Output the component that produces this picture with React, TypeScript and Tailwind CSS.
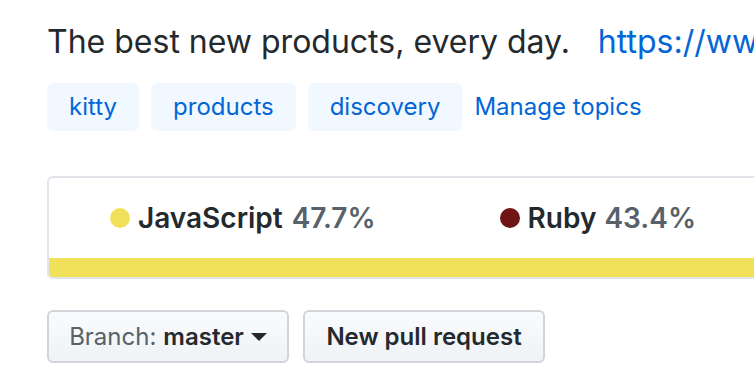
import React from "react";

export default function App() {
  return (
    <div
      className="w-[754px] h-[380px] overflow-hidden bg-white pl-[47px] text-[#24292e]"
      style={{ fontFamily: "Inter, 'Liberation Sans', sans-serif" }}
    >
      <div className="pt-[18px] flex items-baseline whitespace-nowrap text-[32px] leading-[48px]">
        <span>The best new products, every day.</span>
        <a className="ml-[28px] text-[#0366d6]">https://www.producthunt.com</a>
      </div>
      <div className="mt-[17px] flex items-center whitespace-nowrap text-[24px]">
        <a className="h-[48px] leading-[48px] px-[22px] rounded-[6px] bg-[#f1f8ff] text-[#0366d6]">kitty</a>
        <a className="ml-[12px] h-[48px] leading-[48px] px-[22px] rounded-[6px] bg-[#f1f8ff] text-[#0366d6]">products</a>
        <a className="ml-[12px] h-[48px] leading-[48px] px-[22px] rounded-[6px] bg-[#f1f8ff] text-[#0366d6]">discovery</a>
        <a className="ml-[12px] text-[#0366d6]">Manage topics</a>
      </div>
      <div className="mt-[45px] w-[1000px] h-[103px] border-2 border-[#e1e4e8] rounded-[6px] overflow-hidden flex flex-col">
        <div className="flex-1 flex items-center whitespace-nowrap text-[28px] font-semibold pl-[61px]">
          <div className="flex items-center">
            <span className="w-[20px] h-[20px] rounded-full bg-[#f1e05a] mr-[8px]" />
            <span>JavaScript</span>
            <span className="ml-[9px] text-[#586069]">47.7%</span>
          </div>
          <div className="ml-[124px] flex items-center">
            <span className="w-[20px] h-[20px] rounded-full bg-[#701516] mr-[8px]" />
            <span>Ruby</span>
            <span className="ml-[8px] text-[#586069]">43.4%</span>
          </div>
        </div>
        <div className="h-[19px] bg-[#f1e05a]" />
      </div>
      <div className="mt-[31px] flex gap-[14px] whitespace-nowrap text-[24px] font-semibold">
        <button className="w-[242px] h-[53px] rounded-[6px] border-2 border-[#d1d5da] bg-gradient-to-b from-[#fafbfc] to-[#eff3f6] flex items-center justify-center">
          <span className="font-normal text-[#586069]">Branch:</span>
          <span className="ml-[7px]">master</span>
          <svg className="ml-[7px]" width="16" height="10" viewBox="0 0 16 10">
            <path d="M0 1 L16 1 L8 9 Z" fill="#24292e" />
          </svg>
        </button>
        <button className="w-[242px] h-[53px] rounded-[6px] border-2 border-[#d1d5da] bg-gradient-to-b from-[#fafbfc] to-[#eff3f6] flex items-center justify-center">
          New pull request
        </button>
      </div>
    </div>
  );
}
